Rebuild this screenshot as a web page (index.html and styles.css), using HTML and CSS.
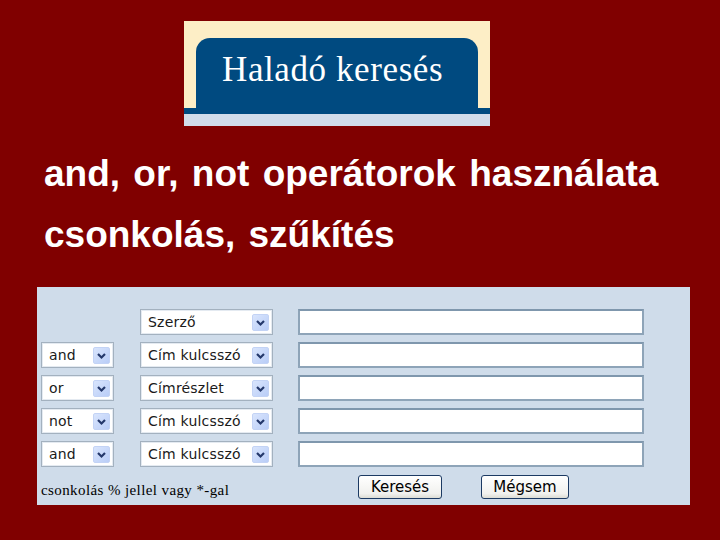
FILE: index.html
```html
<!DOCTYPE html>
<html lang="hu">
<head>
<meta charset="utf-8">
<title>Haladó keresés</title>
<link rel="stylesheet" href="styles.css">
</head>
<body>
<div class="page">
  <div class="banner">
    <div class="tabarea"><div class="tab">Haladó keresés</div></div>
    <div class="stripe"></div>
    <div class="under"></div>
  </div>
  <h1 class="line1">and, or, not operátorok használata</h1>
  <h1 class="line2">csonkolás, szűkítés</h1>
  <div class="panel">
    <div class="grid">
      <div class="blank"></div>
      <div class="sel mid"><span>Szerző</span><i class="arr"><svg viewBox="0 0 17 17" width="17" height="17"><path d="M5 7 L8.5 10.5 L12 7" fill="none" stroke="#24386b" stroke-width="2.2"/></svg></i></div>
      <div class="inp"></div>

      <div class="sel op"><span>and</span><i class="arr"><svg viewBox="0 0 17 17" width="17" height="17"><path d="M5 7 L8.5 10.5 L12 7" fill="none" stroke="#24386b" stroke-width="2.2"/></svg></i></div>
      <div class="sel mid"><span>Cím kulcsszó</span><i class="arr"><svg viewBox="0 0 17 17" width="17" height="17"><path d="M5 7 L8.5 10.5 L12 7" fill="none" stroke="#24386b" stroke-width="2.2"/></svg></i></div>
      <div class="inp"></div>

      <div class="sel op"><span>or</span><i class="arr"><svg viewBox="0 0 17 17" width="17" height="17"><path d="M5 7 L8.5 10.5 L12 7" fill="none" stroke="#24386b" stroke-width="2.2"/></svg></i></div>
      <div class="sel mid"><span>Címrészlet</span><i class="arr"><svg viewBox="0 0 17 17" width="17" height="17"><path d="M5 7 L8.5 10.5 L12 7" fill="none" stroke="#24386b" stroke-width="2.2"/></svg></i></div>
      <div class="inp"></div>

      <div class="sel op"><span>not</span><i class="arr"><svg viewBox="0 0 17 17" width="17" height="17"><path d="M5 7 L8.5 10.5 L12 7" fill="none" stroke="#24386b" stroke-width="2.2"/></svg></i></div>
      <div class="sel mid"><span>Cím kulcsszó</span><i class="arr"><svg viewBox="0 0 17 17" width="17" height="17"><path d="M5 7 L8.5 10.5 L12 7" fill="none" stroke="#24386b" stroke-width="2.2"/></svg></i></div>
      <div class="inp"></div>

      <div class="sel op"><span>and</span><i class="arr"><svg viewBox="0 0 17 17" width="17" height="17"><path d="M5 7 L8.5 10.5 L12 7" fill="none" stroke="#24386b" stroke-width="2.2"/></svg></i></div>
      <div class="sel mid"><span>Cím kulcsszó</span><i class="arr"><svg viewBox="0 0 17 17" width="17" height="17"><path d="M5 7 L8.5 10.5 L12 7" fill="none" stroke="#24386b" stroke-width="2.2"/></svg></i></div>
      <div class="inp"></div>
    </div>
    <div class="foot">
      <div class="note">csonkolás % jellel vagy *-gal</div>
      <div class="btn b1">Keresés</div>
      <div class="btn b2">Mégsem</div>
    </div>
  </div>
</div>
</body>
</html>
```
FILE: styles.css
```css
html, body {
  margin: 0;
  padding: 0;
  background: #800000;
}
.page {
  width: 720px;
  height: 540px;
  overflow: hidden;
  padding-top: 21px;
  box-sizing: border-box;
}
.banner {
  width: 306px;
  margin-left: 184px;
  background: #fdeec6;
}
.tabarea {
  padding: 17px 12px 0 12px;
  height: 70px;
}
.tab {
  height: 70px;
  background: #004a80;
  border-radius: 14px 14px 0 0;
  color: #ffffff;
  font-family: "Liberation Serif", serif;
  font-size: 35px;
  letter-spacing: 0.6px;
  padding-left: 26px;
  line-height: 64px;
}
.stripe {
  height: 6px;
  background: #004a80;
}
.under {
  height: 12px;
  background: #d1dcea;
}
h1 {
  margin: 0;
  color: #ffffff;
  font-family: "Liberation Sans", Arial, sans-serif;
  font-weight: bold;
  font-size: 37px;
  word-spacing: 3px;
  padding-left: 44px;
  line-height: 44px;
  white-space: nowrap;
}
.line1 {
  margin-top: 26px;
}
.line2 {
  margin-top: 17px;
}
.panel {
  margin: 30px 0 0 37px;
  width: 653px;
  height: 218px;
  background: #cfdcea;
  box-sizing: border-box;
  padding: 22px 0 0 4px;
}
.grid {
  display: grid;
  grid-template-columns: 73px 133px 345px;
  column-gap: 26px;
  row-gap: 7px;
  grid-auto-rows: 26px;
}
.grid > :nth-child(3n) {
  margin-left: -1px;
}
.sel {
  background: #ffffff;
  border: 1px solid #a3b1bf;
  box-shadow: inset 0 0 0 1px #e4eaf1;
  display: flex;
  align-items: center;
  justify-content: space-between;
  padding: 0 3px 0 7px;
  font-family: "DejaVu Sans", Verdana, sans-serif;
  font-size: 14px;
  letter-spacing: 0.2px;
  color: #1a1a1a;
  box-sizing: border-box;
}
.arr {
  display: block;
  width: 17px;
  height: 17px;
  border-radius: 2px;
  background: linear-gradient(135deg, #d9e5fd 0%, #b9cdf7 100%);
  border: 1px solid #c3d3f5;
  box-sizing: border-box;
  line-height: 0;
}
.arr svg {
  margin: -1px 0 0 -1px;
}
.inp {
  background: #ffffff;
  border: 2px solid #8ea4b8;
  border-top-color: #7f97ad;
  box-sizing: border-box;
}
.foot {
  display: flex;
  align-items: center;
  margin-top: 8px;
  height: 24px;
}
.note {
  font-family: "Liberation Serif", serif;
  font-size: 15px;
  letter-spacing: 0.4px;
  color: #000000;
  width: 317px;
  margin-top: 6px;
  white-space: nowrap;
}
.btn {
  height: 24px;
  box-sizing: border-box;
  border: 1px solid #1c3a63;
  border-radius: 3px;
  background: linear-gradient(#ffffff, #f1f1ee 80%, #dcdcd4);
  font-family: "DejaVu Sans", Verdana, sans-serif;
  font-size: 15px;
  display: flex;
  align-items: center;
  justify-content: center;
  color: #000000;
}
.b1 {
  width: 84px;
}
.b2 {
  width: 88px;
  margin-left: 39px;
}
```
